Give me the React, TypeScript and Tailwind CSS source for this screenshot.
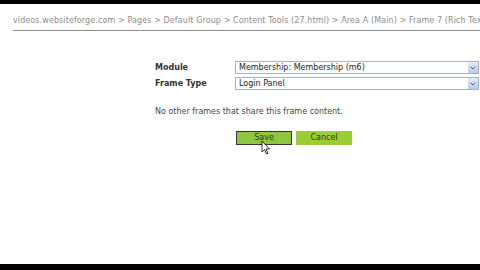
import { ChevronDown } from 'lucide-react'

function Select({ value }: { value: string }) {
  return (
    <div className="flex h-[13px] w-[244px] items-center border border-[#a9b3bf] bg-white">
      <span className="flex-1 pl-[3px] text-[8px] leading-none text-[#222]">{value}</span>
      <span className="flex h-[11px] w-[10px] items-center justify-center bg-gradient-to-b from-[#e4ecf7] to-[#b9cbe6]">
        <ChevronDown size={8} strokeWidth={3} className="text-[#4d6185]" />
      </span>
    </div>
  )
}

export default function App() {
  return (
    <div
      className="flex h-[270px] w-[480px] flex-col overflow-hidden bg-black"
      style={{ fontFamily: '"DejaVu Sans", Verdana, sans-serif' }}
    >
      <div className="h-[4px]" />
      <div className="flex flex-1 bg-white">
        <div className="ml-[1px] w-[2px] bg-[#dcdcdc]" />
        <div className="ml-[2px] w-[1px] bg-[#e6e6e6]" />
        <div className="flex flex-1 flex-col pl-[10px]">
          <div className="mt-[12px] border-b border-[#8a8a8a] pb-[4px] text-[8px] leading-[10px] tracking-[0.1px] whitespace-nowrap text-[#8c8c8c]">
            videos.websiteforge.com &gt; Pages &gt; Default Group &gt; Content Tools (27.html) &gt; Area A (Main) &gt; Frame 7 (Rich Text)
          </div>
          <div className="mt-[30px] flex flex-col gap-[3px] pl-[142px]">
            <div className="flex items-center">
              <span className="w-[80px] text-[8px] font-bold text-[#333]">Module</span>
              <Select value="Membership: Membership (m6)" />
            </div>
            <div className="flex items-center">
              <span className="w-[80px] text-[8px] font-bold text-[#333]">Frame Type</span>
              <Select value="Login Panel" />
            </div>
          </div>
          <div className="mt-[16px] pl-[142px] text-[8px] text-[#444]">
            No other frames that share this frame content.
          </div>
          <div className="relative mt-[13px] flex gap-[4px] pl-[223px]">
            <button className="h-[14px] w-[56px] border border-[#333] bg-[#8dc63f] text-[8px] leading-none text-[#333]">
              Save
            </button>
            <button className="h-[14px] w-[56px] border border-[#9acd4a] bg-[#9acd32] text-[8px] leading-none text-[#333]">
              Cancel
            </button>
            <svg className="absolute left-[248px] top-[9px]" width="10" height="16" viewBox="0 0 10 16">
              <path d="M1 1 L1 12 L3.5 9.5 L5.5 14 L7 13.3 L5 9 L8.5 9 Z" fill="white" stroke="black" strokeWidth="0.8" />
            </svg>
          </div>
        </div>
      </div>
      <div className="h-[6px]" />
    </div>
  )
}
